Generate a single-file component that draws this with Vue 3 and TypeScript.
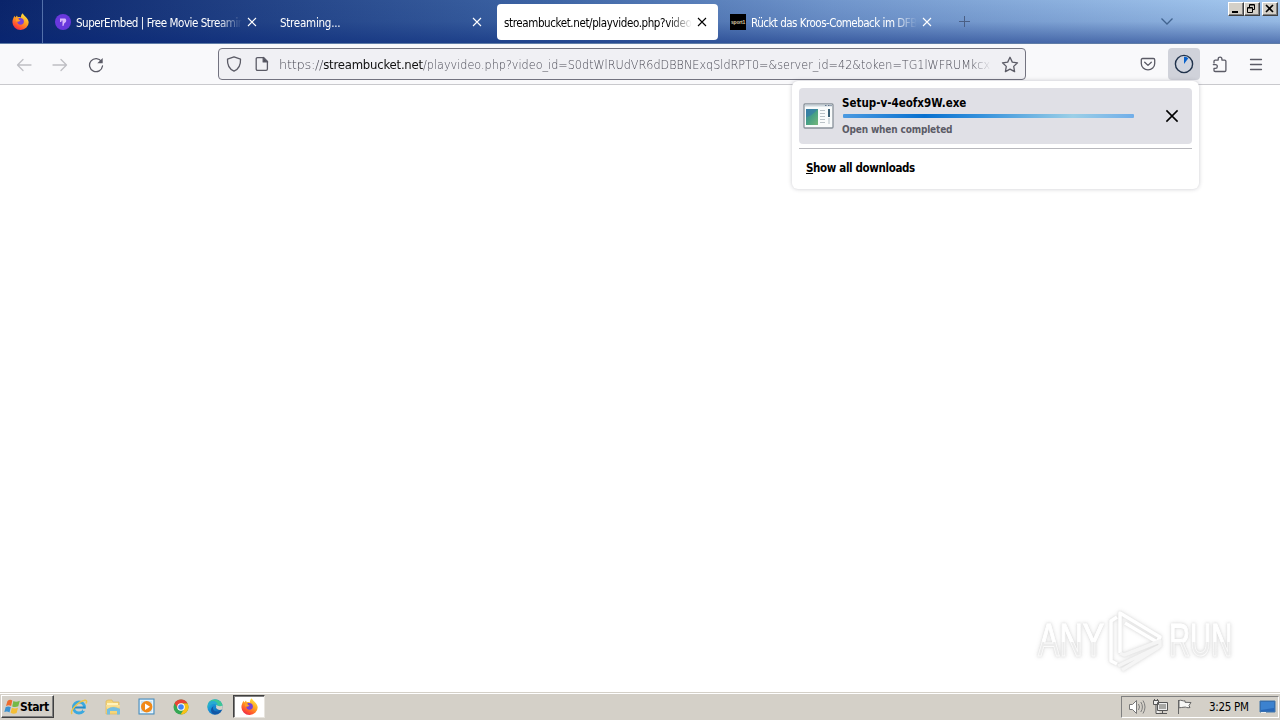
<script setup lang="ts">
interface Tab {
  title: string
  icon: 'embed' | 'sport' | null
  active: boolean
  cls: string
}

const tabs: Tab[] = [
  { title: 'SuperEmbed | Free Movie Streamin', icon: 'embed', active: false, cls: 't1' },
  { title: 'Streaming...', icon: null, active: false, cls: 't2' },
  { title: 'streambucket.net/playvideo.php?video', icon: null, active: true, cls: 't3' },
  { title: 'Rückt das Kroos-Comeback im DFB', icon: 'sport', active: false, cls: 't4' },
]
</script>

<template>
  <div class="desktop">
    <svg class="defs" width="0" height="0" aria-hidden="true">
      <defs>
        <linearGradient id="flame" x1="0.85" y1="0" x2="0.25" y2="1">
          <stop offset="0" stop-color="#fff04a" />
          <stop offset="0.45" stop-color="#ffa31f" />
          <stop offset="0.8" stop-color="#ff5030" />
          <stop offset="1" stop-color="#e8254f" />
        </linearGradient>
        <linearGradient id="edge" x1="0" y1="0" x2="1" y2="1">
          <stop offset="0" stop-color="#2fc5df" />
          <stop offset="0.5" stop-color="#1687d2" />
          <stop offset="1" stop-color="#0d4f9c" />
        </linearGradient>
        <symbol id="firefox" viewBox="0 0 16 16">
          <path d="M10.200 .3c.4 1.300 1.300 2 2.300 2.900C14.500 5 15.700 6.700 15.700 9A7.500 7 0 0 1 8 15.900 7.500 7.200 0 0 1 .4 8.800C.4 6.500 1.200 4.500 2.500 2.600l.6 1.700L4.700 2.300l.7 1.700c1.100-.3 2-.1 3 .2C8.300 2.500 9 1.200 10.200.3z" fill="url(#flame)" />
          <path d="M6 5c2.100-1 5.100 0 5.200 2.700.1 2-1.200 3.300-3.100 3.300-2 0-3.300-1.400-3-3.300 1 .5 2 .3 2.900-.4C6.800 7 6.100 6.300 6 5z" fill="#7542d8" />
          <path d="M3.800 7.700c1.100.7 2.600.2 4-.3-1.100-.2-2-.8-2.200-1.900L3.800 4.800z" fill="#ffa025" />
        </symbol>
        <symbol id="close" viewBox="0 0 10 10">
          <path d="M1 1l8 8M9 1L1 9" fill="none" stroke="currentColor" stroke-width="1.100" />
        </symbol>
      </defs>
    </svg>

    <header class="tabstrip">
      <div class="home-tab"><svg width="17" height="17"><use href="#firefox" /></svg></div>
      <div v-for="tab in tabs" :key="tab.cls" class="tab" :class="{ active: tab.active }">
        <svg v-if="tab.icon === 'embed'" class="favicon" viewBox="0 0 16 16">
          <circle cx="8" cy="8" r="8" fill="#6838dc" />
          <path d="M5 4.500h5.200c1.700 1.200 1.300 4-.9 4.700L8.400 12H7.500V6.500h-.8L6.200 8H5z" fill="#d7b7fa" />
        </svg>
        <div v-else-if="tab.icon === 'sport'" class="favicon sport">sport1</div>
        <span class="label"><span :class="tab.cls">{{ tab.title }}</span></span>
        <svg class="tab-close" width="10" height="10"><use href="#close" /></svg>
      </div>
      <svg class="new-tab" width="13" height="13" viewBox="0 0 13 13"><path d="M6.500 1v11M1 6.500h11" stroke="#4a5f85" /></svg>
      <svg class="chevron" width="14" height="9" viewBox="0 0 14 9"><path d="M1.500 1.500L7 7l5.500-5.500" fill="none" stroke="#41638f" stroke-width="1.300" /></svg>
      <div class="window-buttons">
        <div class="winbtn"><svg viewBox="0 0 13 11"><path d="M3 9h6" stroke="#000" stroke-width="2" /></svg></div>
        <div class="winbtn"><svg viewBox="0 0 13 11"><path d="M4.500 4V1.500h5v5H8M5 2h4M2.500 4.500h5v5h-5zM3 5h4" fill="none" stroke="#000" /></svg></div>
        <div class="winbtn last"><svg viewBox="0 0 13 11"><path d="M3 2l7 7M10 2L3 9" stroke="#000" stroke-width="1.600" /></svg></div>
      </div>
    </header>

    <nav class="toolbar">
      <svg class="back" width="16" height="16" viewBox="0 0 16 16"><path d="M15 8H1.500M7 2.500L1.500 8 7 13.500" /></svg>
      <svg class="forward" width="16" height="16" viewBox="0 0 16 16"><path d="M1 8h13.500M9 2.500L14.500 8 9 13.500" /></svg>
      <svg class="reload" width="16" height="16" viewBox="0 0 16 16"><path d="M13.500 4.600A6.500 6.500 0 1 0 14.500 9" /><path d="M14.700 1v5.300H9.300z" fill="#5b5b66" stroke="none" /></svg>
      <div class="urlbar">
        <svg class="shield" width="16" height="16" viewBox="0 0 16 16"><path d="M8 .8l6.500 2.400c.3 5.200-1.800 9.800-6.500 12C3.300 13 1.200 8.400 1.500 3.200z" /></svg>
        <svg class="page" width="14" height="16" viewBox="0 0 14 16"><path d="M2.500 1.700h6.200l3.700 3.700v7.600c0 .8-.5 1.300-1.300 1.300H2.500c-.8 0-1.300-.5-1.300-1.300V3c0-.8.5-1.300 1.300-1.300z" /><path d="M8.200 1.500v4.400h4.400z" fill="#4c4c57" /></svg>
        <div class="url"><span class="scheme">https://</span><b>streambucket.net</b><span class="path">/playvideo.php?video_id=S0dtWlRUdVR6dDBBNExqSldRPT0=&amp;server_id=42&amp;token=TG1lWFRUMkcx</span></div>
        <svg class="star" width="18" height="17" viewBox="0 0 18 17"><path d="M9 1.300l2.300 4.800 5.200.7-3.800 3.600.9 5.200L9 13.100l-4.600 2.500.9-5.200-3.800-3.600 5.200-.7z" /></svg>
      </div>
      <div class="tools">
        <svg class="pocket" width="16" height="16" viewBox="0 0 16 16"><path d="M2.600 2.500h10.800c.8 0 1.300.5 1.300 1.300v3.700c0 3.700-3 6.300-6.700 6.300S1.300 11.200 1.300 7.500V3.800c0-.8.5-1.300 1.300-1.300z" /><path d="M4.700 6.200L8 9.400l3.300-3.200" /></svg>
        <div class="download-btn">
          <svg width="20" height="20" viewBox="0 0 20 20"><circle cx="10" cy="10" r="8.600" fill="#d0d4de" stroke="#20324b" stroke-width="1.400" /><path d="M10 10V2.800a7.200 7.200 0 0 1 4.300 1.400z" fill="#0860ca" /></svg>
        </div>
        <svg class="puzzle" width="16" height="17" viewBox="0 0 16 17"><path d="M2 7V5.300c0-.8.400-1.200 1.200-1.200h3V3c0-2.500 3.700-2.500 3.700 0v1.100h2.800c.8 0 1.200.4 1.200 1.200v9c0 .8-.4 1.200-1.200 1.200H3.200c-.8 0-1.200-.4-1.200-1.200v-2h1.500c2.400 0 2.400-3.700 0-3.700H1.300" /></svg>
        <svg class="menu" width="14" height="13" viewBox="0 0 14 13"><path d="M1.500 1.500h11M1.500 6.500h11M1.500 11.500h11" /></svg>
      </div>

      <section class="downloads">
        <div class="download-row">
          <svg class="exe" width="32" height="28" viewBox="0 0 32 28">
            <defs><linearGradient id="exefill" x1="0" x2="1" y1="0" y2="1"><stop stop-color="#397fa5" /><stop offset=".5" stop-color="#48a184" /><stop offset="1" stop-color="#75b879" /></linearGradient></defs>
            <rect x="2" y="2" width="29" height="24" rx="1" fill="#f9fbfb" stroke="#89919a" stroke-width="1.300" />
            <path d="M3 3.500h27" stroke="#cbd4da" stroke-width="2" /><path d="M23 3.500h1.500M26 3.500h1.500M28.500 3.500h1" stroke="#60738d" />
            <rect x="4" y="7" width="12" height="16" fill="url(#exefill)" /><path d="M4 15q6-1 12-8H4z" fill="#367baa" opacity=".65" />
            <path d="M18 8.500h5M18 11.500h5M18 14.500h5M18 17.500h5M18 20.500h5" stroke="#bac2c7" /><path d="M27 7v8" stroke="#395f74" stroke-width="2" /><path d="M27 16v6" stroke="#d5dde1" stroke-width="2" />
          </svg>
          <div class="download-info">
            <div class="filename">Setup-v-4eofx9W.exe</div>
            <div class="progress"></div>
            <div class="status">Open when completed</div>
          </div>
          <svg class="cancel" width="14" height="14"><use href="#close" /></svg>
        </div>
        <div class="separator"></div>
        <div class="show-all"><u>S</u>how all downloads</div>
      </section>
    </nav>

    <main class="viewport">
      <div class="watermark">
        <span class="any">ANY</span>
        <svg width="62" height="66" viewBox="0 0 62 66">
          <g fill="none" stroke="#fff" stroke-width="3.500" stroke-linejoin="round">
            <path d="M12 10L6 14V54l6 3" />
            <path d="M15 46V6L55 30l-3 5L20 16" />
            <path d="M15 46l4 2 36-14v5L13 59M17 63l37-23" stroke="#f5f5f5" />
          </g>
        </svg>
        <span class="run">RUN</span>
      </div>
    </main>

    <footer class="taskbar">
      <div class="start">
        <svg width="17" height="16" viewBox="0 0 17 16">
          <path d="M3.500 2Q6-.2 8.300 1.600L7.100 7Q4.700 5.600 2 7z" fill="#ed6b2c" />
          <path d="M9.400 2.100q2.600 1.600 6.400-.3L14.300 7.300q-3.100 1.500-6.100.1z" fill="#74b947" />
          <path d="M1.700 8Q4.300 6.800 6.800 8.100l-1.300 5.300q-2.400-1.800-5.200-.4z" fill="#3b92d1" />
          <path d="M7.900 8.700q3 1.400 6.100 0l-1.400 5.300q-3 1.500-6-.2z" fill="#f4be35" />
        </svg><span>Start</span>
      </div>
      <div class="launchers">
        <svg viewBox="0 0 18 18"><circle cx="9" cy="9.500" r="5.500" fill="none" stroke="#3ba9df" stroke-width="3" /><path d="M4 9.500h11" stroke="#268bc7" stroke-width="2" /><path d="M13 10.700h4v2.200h-4z" fill="#d4d0c8" /><path d="M2 16C-.3 13 8 3.200 15 2.200c2-.2 1.900 1.500.9 3.300" fill="none" stroke="#ecc449" stroke-width="1.500" /></svg>
        <svg viewBox="0 0 18 18"><path d="M2 3l2-1h4l1 2h6v12H2z" fill="#f5d578" stroke="#dcb85c" stroke-width=".7" /><path d="M3 5h11v3H3z" fill="#fff3bc" /><path d="M3 11q6-4 13 0v5.500h-3V13H6v3.500H3z" fill="#75bfe1" /><path d="M2 7h14l-.5 3Q9 6 3 11z" fill="#f8df94" /></svg>
        <svg viewBox="0 0 18 18"><rect x="1" y="1" width="15" height="15" fill="#c8e2f6" stroke="#4188b9" /><rect x="2.500" y="2.500" width="12" height="12" fill="none" stroke="#e9f7fe" /><circle cx="8.700" cy="8.700" r="5.700" fill="#f18918" /><path d="M7 5.500l5 3.200L7 12z" fill="#fff" /></svg>
        <svg viewBox="0 0 18 18"><circle cx="9" cy="9" r="7.500" fill="#35a753" /><path d="M2.500 5.200A7.500 7.500 0 0 1 15.600 5.500H9l-2.900 5.300z" fill="#e94335" /><path d="M9 5.500h6.600a7.500 7.500 0 0 1-7 11l3.400-5.600z" fill="#fbc116" /><circle cx="9" cy="9" r="3.800" fill="#fff" /><circle cx="9" cy="9" r="2.800" fill="#4285f4" /></svg>
        <svg viewBox="0 0 18 18"><circle cx="9" cy="9" r="7.700" fill="url(#edge)" /><path d="M3.300 3.800C7-.5 16 1.300 16.500 7.600c.3 3.400-4.500 4.400-6.300 2.400 1.200-1.800.3-4.200-2.500-4.200-3.100 0-5.400 1.500-6.200 4.300 0-2.500.5-4.700 1.800-6.300z" fill="#3cc797" /><path d="M2.800 4.500C7.500.7 13 4.400 11.300 8.200c-1-3.500-6.500-3.300-9.400.8.100-2 .3-3.300.9-4.500z" fill="#28aad4" /><path d="M7.500 8.200c-2 4.400 3.400 7 7.800 4.400-1.700 2.600-4.400 4-7 3.700-4.300-1.400-4-6.700-.8-8.100z" fill="#1257a5" /><path d="M10 9.600c.4-1 .4-1.800-.3-2.600 2.200.4 3.500 2 7 .5v3.800c-2.400 1.300-5.800.9-6.700-1.700z" fill="#d4d0c8" /></svg>
      </div>
      <div class="task-active"><svg width="17" height="17"><use href="#firefox" /></svg></div>
      <div class="tray">
        <svg class="sound" width="18" height="18" viewBox="0 0 18 18"><path d="M1.500 6.500h3l4-4v13l-4-4h-3z" fill="#fff" stroke="#777" /><path d="M10.500 6q2 3 0 6M12.800 4q3.200 5 0 10M15 2.500q4 6.500 0 13" fill="none" stroke="#7d7d7d" /></svg>
        <svg class="network" width="18" height="18" viewBox="0 0 18 18"><path d="M5.500 4.500h10v8h-10zM8 15.500h7M10.500 13v2.500M1.500 2.500h5v4h-5zM4 6.500v9h4M2.500 1v1.500M5.500 1v1.500" fill="#eee" stroke="#555" /><path d="M7 6h7v5H7z" fill="#a7a7a4" /></svg>
        <svg class="flag" width="18" height="18" viewBox="0 0 18 18"><path d="M2.500 2v14M3 2.500c2-1 4 1 6 .3v1.500l6 .2-2 3 1 2c-3 1-4-1-6-.3-2 .6-3 0-5 .6z" fill="#f7f7f5" stroke="#666" /></svg>
        <span class="clock">3:25 PM</span>
        <svg class="show-desktop" width="17" height="16" viewBox="0 0 17 16"><path d="M1 2h15v11H1z" fill="#2868b9" stroke="#4376a8" /><path d="M2 3h13v6L2 11z" fill="#3c82cf" /><path d="M2 13h5v1H2z" fill="#eee" /></svg>
      </div>
    </footer>
  </div>
</template>

<style scoped>
* { box-sizing: border-box; }
.desktop { width: 1280px; height: 720px; display: flex; flex-direction: column; overflow: hidden; background: #fff; color: #000; font: 11px "DejaVu Sans Condensed", "DejaVu Sans", sans-serif; font-stretch: condensed; }
.defs { position: absolute; }
svg { flex: none; display: block; }
.tabstrip { height: 44px; display: flex; align-items: center; flex: none; position: relative; border-bottom: 1px solid #607da7; background: linear-gradient(180deg, rgba(9,36,110,0) 0%, rgba(18,51,127,.12) 50%, rgba(7,38,120,.52) 100%), linear-gradient(90deg, #0a246a 0%, #3e65a5 43%, #7196cc 65%, #a6caf0 100%); }
.home-tab { width: 43px; height: 43px; padding: 0 0 0 12px; display: flex; align-items: center; border-right: 1px solid #5370aa; margin-right: 4px; }
.tab { width: 221px; height: 36px; display: flex; align-items: center; padding: 0 11px 0 8px; margin-right: 4px; color: #fff; flex: none; border-radius: 4px; }
.tab.active { color: #000; background: #fff; padding-left: 7px; }
.favicon { width: 16px; height: 16px; margin-right: 5px; flex: none; }
.sport { background: #000; color: #d6c9a0; font: bold 5px/16px "Liberation Sans", sans-serif; text-align: center; letter-spacing: -.2px; }
.label { flex: 1; min-width: 0; overflow: hidden; white-space: nowrap; font-size: 11.500px; line-height: 18px; padding-top: 2px; mask-image: linear-gradient(90deg, #000 calc(100% - 24px), transparent); }
.tab-close { margin-left: 5px; }
.t1 { letter-spacing: -.45px; }
.t2 { letter-spacing: -.25px; }
.t3 { letter-spacing: -.39px; }
.t4 { letter-spacing: -.51px; }
.new-tab { margin-left: 11px; }
.chevron { margin-left: 189px; }
.window-buttons { display: flex; position: absolute; right: 2px; top: 2px; }
.winbtn { width: 16px; height: 14px; background: #d4d0c8; border: 1px solid; border-color: #fff #404040 #404040 #fff; box-shadow: inset -1px -1px #808080; }
.winbtn svg { width: 13px; height: 11px; }
.last { margin-left: 2px; }
.toolbar { height: 41px; display: flex; align-items: center; background: #f9f9fb; border-bottom: 1px solid #c9c9cd; position: relative; flex: none; }
.toolbar > svg, .urlbar svg, .pocket, .puzzle, .menu { fill: none; stroke: #5b5b66; stroke-width: 1.300; stroke-linecap: round; stroke-linejoin: round; }
.toolbar > svg { margin-top: 1px; }
.toolbar .back { margin-left: 16px; stroke: #bfbfc4; }
.toolbar .forward { margin-left: 20px; stroke: #bfbfc4; }
.reload { margin-left: 20px; }
.urlbar { width: 808px; height: 32px; margin-left: 114px; border: 1px solid #737380; border-radius: 4px; background: #f0f0f4; display: flex; align-items: center; padding: 0 6px 0 7px; }
.page { margin-left: 13px; }
.url { width: 713px; margin-left: 10px; padding-top: 1px; overflow: hidden; white-space: nowrap; font: 200 13px/20px "DejaVu Sans", sans-serif; color: #4b4b56; mask-image: linear-gradient(90deg, #000 calc(100% - 20px), transparent); }
.scheme { letter-spacing: -.3px; }
.url b { font-weight: 400; font-family: "DejaVu Sans Condensed", "DejaVu Sans", sans-serif; font-stretch: condensed; letter-spacing: -.22px; color: #111; }
.path { display: inline-block; transform: scaleX(.863); transform-origin: left center; }
.star { margin-left: auto; }
.tools { display: flex; align-items: center; margin-left: 114px; }
.download-btn { width: 32px; height: 32px; margin-left: 12px; border-radius: 4px; background: #d0d2da; display: grid; place-items: center; }
.puzzle { margin-left: 12px; }
.menu { margin-left: 21px; }
.downloads { position: absolute; z-index: 2; left: 792px; top: 37px; width: 407px; height: 108px; background: #fff; border-radius: 6px; padding: 7px; box-shadow: 0 0 4px rgba(40,40,60,.25); font-family: "DejaVu Sans Condensed", "DejaVu Sans", sans-serif; font-weight: bold; }
.download-row { height: 56px; width: 393px; padding: 5px 13px 6px 3px; background: #e0e0e6; border-radius: 4px; display: flex; align-items: center; }
.download-info { margin-left: 9px; width: 291px; }
.filename { font-size: 11.500px; line-height: 16px; letter-spacing: 0; margin-left: -1px; }
.progress { height: 4px; margin: 3px 0 5px; border-radius: 1px; background: linear-gradient(90deg, #4b9ae1 0%, #0870cf 28%, #3491dc 47%, #9bcfe7 79%, #71aee9 100%); }
.status { font-size: 10px; line-height: 14px; letter-spacing: -.16px; margin: 0 0 -1px -1px; color: #5b5b66; }
.cancel { margin-left: auto; }
.separator { height: 1px; background: #b8b8bd; margin-top: 4px; }
.show-all { padding: 11px 7px 0; font-size: 11.500px; line-height: 16px; letter-spacing: -.36px; }
.viewport { flex: 1; min-height: 0; background: #fff; position: relative; }
.watermark { position: absolute; left: 1038px; top: 521px; width: 194px; height: 68px; display: flex; align-items: center; font: 46px/60px "Liberation Sans", sans-serif; filter: drop-shadow(0 0 1px #dcdcdc) drop-shadow(0 0 2px #e8e8e8); }
.watermark svg { margin: 0 2px; }
.any, .run { display: block; width: 96px; flex: none; transform-origin: left center; white-space: nowrap; color: transparent; -webkit-text-stroke: 1px rgba(255,255,255,.8); background: linear-gradient(180deg, #fff 54%, #ececec 54%); background-clip: text; }
.any { transform: scaleX(.7); margin-right: -31px; }
.run { transform: scaleX(.635); }
.taskbar { height: 28px; flex: none; display: flex; align-items: center; background: #d4d0c8; border-top: 1px solid #d4d0c8; box-shadow: inset 0 1px #fff; }
.start { width: 53px; height: 23px; margin-left: 1px; padding: 0 2px; background: #d4d0c8; border: 1px solid; border-color: #fff #404040 #404040 #fff; box-shadow: inset -1px -1px #808080; display: flex; align-items: center; font: bold 12px "DejaVu Sans Condensed", "DejaVu Sans", sans-serif; font-stretch: condensed; letter-spacing: -.4px; }
.start span { padding-top: 1px; margin-left: -1px; }
.launchers { display: flex; gap: 16px; margin-left: 16px; }
.launchers svg { width: 18px; height: 18px; }
.task-active { width: 32px; height: 23px; margin-left: 9px; background: #fff; display: grid; place-items: center; border: 1px solid; border-color: #404040 #e8e5df #e8e5df #404040; box-shadow: inset 1px 1px #808080; }
.tray { display: flex; align-items: center; width: 158px; height: 22px; margin-left: auto; margin-right: 1px; border: 1px solid; border-color: #808080 #fff #fff #808080; padding-left: 6px; }
.network { margin-left: 6px; }
.flag { margin-left: 6px; }
.clock { margin-left: 15px; width: 44px; white-space: nowrap; font-size: 11.500px; letter-spacing: -.3px; padding-top: 1px; }
.show-desktop { margin-left: 6px; }
</style>

<style>
body { background: #fff; }
</style>
